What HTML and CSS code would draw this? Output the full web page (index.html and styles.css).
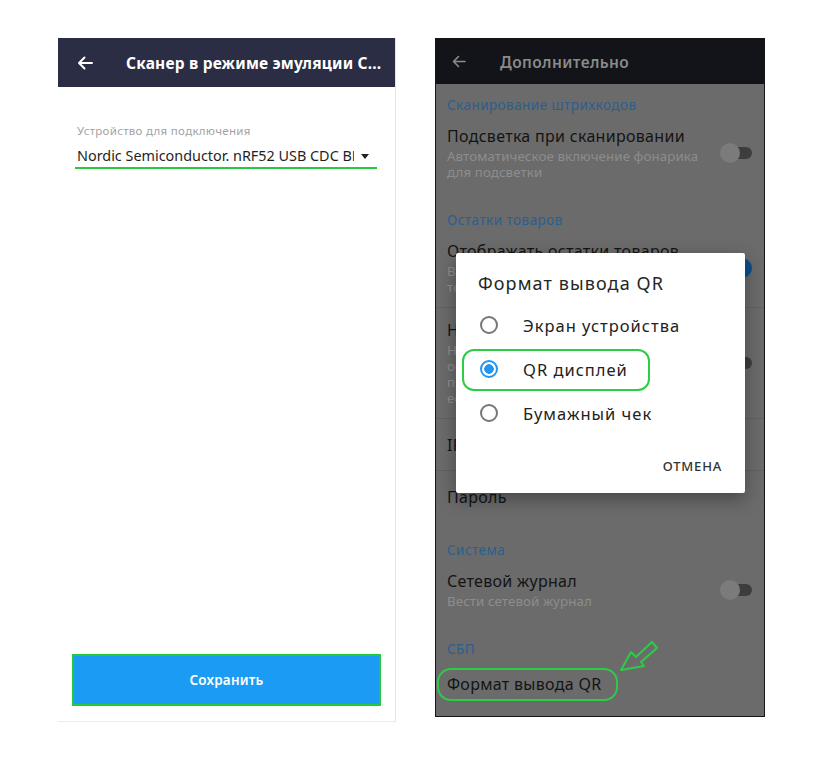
FILE: index.html
```html
<!DOCTYPE html>
<html lang="ru">
  <head>
    <meta charset="UTF-8" />
    <meta name="viewport" content="width=device-width, initial-scale=1.0" />
    <title>Настройки сканера</title>
    <link rel="stylesheet" href="styles.css">
  </head>
  <body>
    <div class="page">
      <!-- экран 1: выбор устройства -->
      <div class="phone phone-light">
        <div class="topbar topbar-light">
          <svg class="back" width="16" height="14" viewBox="0 0 16 14">
            <path d="M15 7H2M7.5 1.5L2 7l5.5 5.5" fill="none" stroke="currentColor" stroke-width="2" stroke-linecap="round" stroke-linejoin="round"/>
          </svg>
          <h1 class="topbar-title">Сканер в режиме эмуляции С...</h1>
        </div>
        <div class="field">
          <div class="field-label">Устройство для подключения</div>
          <div class="select">
            <span class="select-value">Nordic Semiconductor. nRF52 USB CDC BLE</span>
            <span class="caret"></span>
          </div>
        </div>
        <button class="btn-save">Сохранить</button>
      </div>

      <!-- экран 2: дополнительные настройки + диалог -->
      <div class="phone phone-dark">
        <div class="topbar topbar-dark">
          <svg class="back" width="14" height="13" viewBox="0 0 14 13">
            <path d="M13 6.5H1.5M6.5 1.5L1.5 6.5l5 5" fill="none" stroke="currentColor" stroke-width="1.6" stroke-linecap="round" stroke-linejoin="round"/>
          </svg>
          <h1 class="topbar-title">Дополнительно</h1>
        </div>
        <div class="settings">
          <div class="section-title first">Сканирование штрихкодов</div>
          <div class="item">
            <div class="item-text">
              <div class="item-title">Подсветка при сканировании</div>
              <div class="item-sub">Автоматическое включение фонарика<br>для подсветки</div>
            </div>
            <span class="toggle"></span>
          </div>

          <div class="section-title">Остатки товаров</div>
          <div class="item">
            <div class="item-text">
              <div class="item-title">Отображать остатки товаров</div>
              <div class="item-sub">Выводить количество на складе<br>товаров в карточке</div>
            </div>
            <span class="toggle on"></span>
          </div>
          <div class="item">
            <div class="item-text">
              <div class="item-title">Не учитывать резерв</div>
              <div class="item-sub">Не вычитать<br>остатки в резерве<br>при расчёте<br>если товар отложен</div>
            </div>
            <span class="toggle"></span>
          </div>
          <div class="item single">
            <div class="item-title">IP-адрес сервера</div>
          </div>
          <div class="item single">
            <div class="item-title">Пароль</div>
          </div>

          <div class="section-title">Система</div>
          <div class="item">
            <div class="item-text">
              <div class="item-title">Сетевой журнал</div>
              <div class="item-sub">Вести сетевой журнал</div>
            </div>
            <span class="toggle"></span>
          </div>

          <div class="section-title">СБП</div>
          <div class="item single">
            <div class="item-title">Формат вывода QR</div>
          </div>
        </div>

        <div class="dialog">
          <div class="dialog-title">Формат вывода QR</div>
          <div class="radio-row"><span class="radio"></span>Экран устройства</div>
          <div class="radio-row"><span class="radio checked"></span>QR дисплей</div>
          <div class="radio-row"><span class="radio"></span>Бумажный чек</div>
          <div class="dialog-actions"><span class="dialog-btn">ОТМЕНА</span></div>
          <div class="mark mark-option"></div>
        </div>

        <div class="mark mark-item"></div>
        <svg class="mark-arrow" width="52" height="38" viewBox="0 0 52 38">
          <path d="M1 33 L11 15 L16 20 L32 5 L37 11 L21 25 L24 29 Z" fill="none" stroke="#2dcc45" stroke-width="2" stroke-linejoin="round"/>
        </svg>
      </div>
    </div>
  </body>
</html>
```

FILE: styles.css
```css
* {
  margin: 0;
  padding: 0;
  box-sizing: border-box;
}
body {
  background: #fff;
  font-family: "Noto Sans", "Open Sans", sans-serif;
}
.page {
  display: flex;
  align-items: flex-start;
  gap: 39px;
  padding: 38px 0 0 58px;
}

/* общий вид экрана */
.phone {
  display: flex;
  flex-direction: column;
}
.phone-light {
  width: 338px;
  height: 684px;
  border-right: 1px solid #e3e3e3;
  border-bottom: 1px solid #ececec;
}
.phone-dark {
  position: relative;
  width: 330px;
  height: 679px;
  border: 1px solid #151515;
  background: #6b6b6b;
  overflow: hidden;
}

.topbar {
  display: flex;
  align-items: center;
  flex-shrink: 0;
}
.topbar-title {
  font-size: 15.5px;
  font-weight: 700;
  letter-spacing: 0.2px;
  white-space: nowrap;
}
.topbar-light {
  height: 49px;
  padding-left: 19px;
  gap: 33px;
  background: #2a2d44;
  color: #fff;
}
.topbar-dark {
  height: 45px;
  padding-left: 16px;
  gap: 34px;
  background: #121419;
  color: #8a8a8a;
}
.topbar-dark .topbar-title {
  font-weight: 600;
  letter-spacing: 0.4px;
}

/* поле выбора устройства */
.field {
  margin: 37px 18px 0 17px;
}
.field-label {
  padding-left: 2px;
  font-size: 11.5px;
  line-height: 14px;
  letter-spacing: 0.3px;
  color: #a3a3a3;
}
.select {
  display: flex;
  align-items: center;
  gap: 7px;
  margin-top: 8px;
  padding: 0 8px 1px 2px;
  height: 23px;
  border-bottom: 2px solid #27c93f;
}
.select-value {
  flex: 1;
  overflow: hidden;
  white-space: nowrap;
  font-size: 14.4px;
  line-height: 20px;
  color: #1f1f1f;
}
.caret {
  width: 0;
  height: 0;
  border-left: 4.5px solid transparent;
  border-right: 4.5px solid transparent;
  border-top: 5px solid #222;
}

.btn-save {
  margin: auto 14px 15px 14px;
  height: 52px;
  border: 2px solid #25c93c;
  background: #1b9bf3;
  color: #fff;
  font-family: inherit;
  font-size: 13.5px;
  font-weight: 600;
  letter-spacing: 0.2px;
}

/* список настроек */
.section-title {
  padding: 19px 12px 1px 11px;
  font-size: 13.5px;
  line-height: 16px;
  letter-spacing: 0.45px;
  color: #2b5f8e;
}
.section-title.first {
  padding-top: 13px;
}
.item {
  display: flex;
  align-items: center;
  padding: 12px 12px 12px 11px;
  border-bottom: 1px solid #616161;
}
.item.single {
  min-height: 52px;
}
.item-text {
  flex: 1;
}
.item-title {
  font-size: 16px;
  line-height: 20px;
  letter-spacing: 0.3px;
  color: #141414;
  white-space: nowrap;
}
.item-sub {
  margin-top: 2px;
  font-size: 13.3px;
  line-height: 16px;
  letter-spacing: 0.1px;
  color: #8d8d8d;
  white-space: nowrap;
}
.section-title + .item,
.settings > .item:has(+ .section-title),
.settings > .item:last-child {
  border-bottom-color: transparent;
}
.section-title + .item:has(+ .item) {
  border-bottom-color: #616161;
}

.toggle {
  position: relative;
  flex-shrink: 0;
  width: 32px;
  height: 20px;
}
.toggle::before {
  content: "";
  position: absolute;
  left: 4px;
  top: 4px;
  width: 28px;
  height: 12px;
  border-radius: 6px;
  background: #3d3d3d;
}
.toggle::after {
  content: "";
  position: absolute;
  left: 0;
  top: 0;
  width: 20px;
  height: 20px;
  border-radius: 50%;
  background: #7b7b7b;
}
.toggle.on::before {
  background: #355a7a;
}
.toggle.on::after {
  left: 12px;
  background: #0e4f89;
}

/* диалог выбора формата */
.dialog {
  position: absolute;
  left: 20px;
  top: 214px;
  width: 289px;
  height: 240px;
  background: #fff;
  border-radius: 2px;
  box-shadow: 0 6px 18px rgba(0, 0, 0, 0.35);
}
.dialog-title {
  padding: 18px 22px 0;
  font-size: 18px;
  line-height: 24px;
  letter-spacing: 1.1px;
  color: #262626;
}
.dialog-title + .radio-row {
  margin-top: 8px;
}
.radio-row {
  display: flex;
  align-items: center;
  gap: 25px;
  height: 44px;
  padding-left: 24px;
  font-size: 16.5px;
  letter-spacing: 1px;
  color: #222;
}
.radio {
  width: 18px;
  height: 18px;
  border: 2px solid #767676;
  border-radius: 50%;
}
.radio.checked {
  border-color: #2196f3;
  background: radial-gradient(circle, #2196f3 0 4.5px, transparent 5px);
}
.dialog-actions {
  display: flex;
  justify-content: flex-end;
  padding: 13px 23px 0;
}
.dialog-btn {
  font-size: 13px;
  font-weight: 500;
  line-height: 36px;
  letter-spacing: 0.8px;
  color: #333;
}

/* зелёные пометки на скриншоте */
.mark {
  position: absolute;
  border: 2px solid #2dcc45;
}
.mark-option {
  left: 6px;
  top: 96px;
  width: 188px;
  height: 42px;
  border-radius: 12px;
}
.mark-item {
  left: 1px;
  top: 629px;
  width: 181px;
  height: 33px;
  border-radius: 14px;
}
.mark-arrow {
  position: absolute;
  left: 184px;
  top: 598px;
}
```
